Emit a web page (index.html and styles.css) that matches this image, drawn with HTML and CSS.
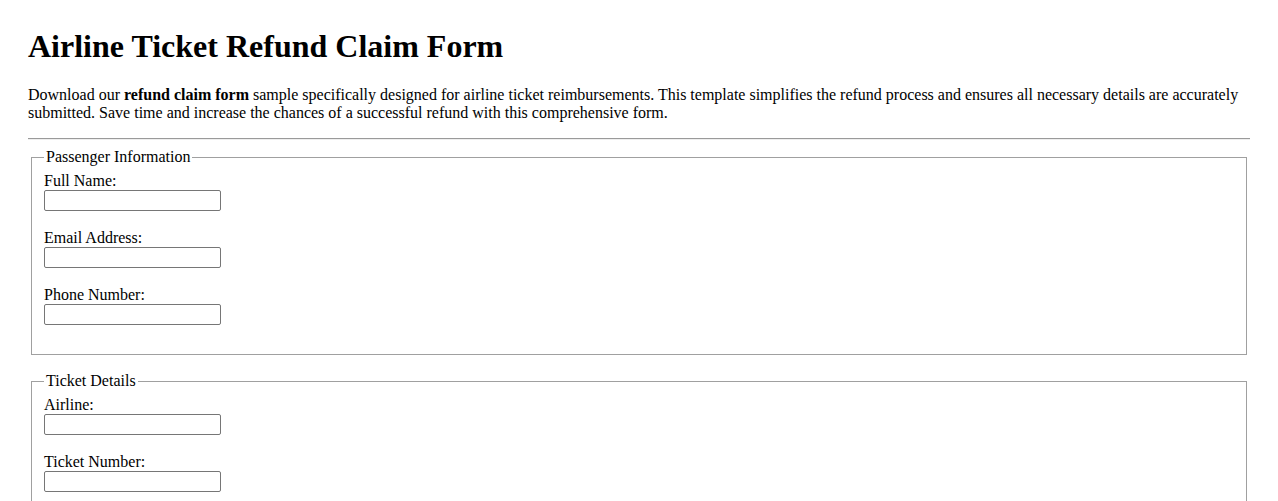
FILE: index.html
```html
<!DOCTYPE html>
<html lang="en">
<head>
<meta charset="utf-8">
<title>Airline Ticket Refund Claim Form</title>
<link rel="stylesheet" href="styles.css">
</head>
<body>
<h1 class="title">Airline Ticket Refund Claim Form</h1>
<p class="intro">Download our <strong>refund claim form</strong> sample specifically designed for airline ticket reimbursements. This template simplifies the refund process and ensures all necessary details are accurately submitted. Save time and increase the chances of a successful refund with this comprehensive form.</p>
<hr class="rule">
<form class="claim">
  <fieldset class="group">
    <legend class="group-title">Passenger Information</legend>
    <div class="field"><label class="field-label" for="name">Full Name:</label><input class="field-input" type="text" id="name"></div>
    <div class="field"><label class="field-label" for="email">Email Address:</label><input class="field-input" type="email" id="email"></div>
    <div class="field"><label class="field-label" for="phone">Phone Number:</label><input class="field-input" type="tel" id="phone"></div>
  </fieldset>
  <fieldset class="group">
    <legend class="group-title">Ticket Details</legend>
    <div class="field"><label class="field-label" for="airline">Airline:</label><input class="field-input" type="text" id="airline"></div>
    <div class="field"><label class="field-label" for="ticket">Ticket Number:</label><input class="field-input" type="text" id="ticket"></div>
    <div class="field"><label class="field-label" for="flight">Flight Number:</label><input class="field-input" type="text" id="flight"></div>
  </fieldset>
</form>
</body>
</html>
```
FILE: styles.css
```css
html, body {
  background: #fff;
}
body {
  margin: 0;
  padding: 28px;
  font-family: "Liberation Serif", "Times New Roman", serif;
  font-size: 16px;
  color: #000;
}
.title {
  font-size: 32px;
  font-weight: bold;
  margin: 0 0 21px;
  line-height: 37px;
}
.intro {
  margin: 0 0 16px;
  line-height: 18px;
}
.rule {
  margin: 0 0 8px;
  border: 0;
  border-top: 1px solid #9a9a9a;
  border-bottom: 1px solid #eee;
  height: 0;
}
.claim {
  margin: 0;
}
.group {
  margin: 0 3px 17px;
  padding: 5px 12px 12px;
  border: 1px solid #a0a0a0;
}
.group-title {
  padding: 0 2px;
  line-height: 18px;
}
.field {
  margin-bottom: 17px;
}
.field-label {
  display: block;
  line-height: 19px;
}
.field-input {
  display: block;
  box-sizing: border-box;
  width: 177px;
  height: 21px;
  margin: 0;
  border: 1px solid #767676;
  border-radius: 2px;
  padding: 1px 2px;
  font: inherit;
  background: #fff;
}
```
